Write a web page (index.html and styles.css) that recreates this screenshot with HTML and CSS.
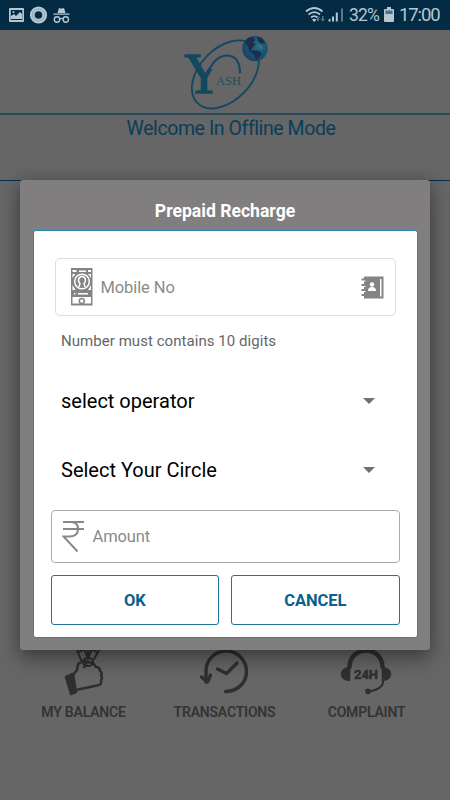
FILE: index.html
```html
<!DOCTYPE html>
<html lang="en">
<head>
<meta charset="utf-8">
<title>Prepaid Recharge</title>
<link rel="stylesheet" href="styles.css">
</head>
<body>
<div class="screen">
  <header class="status">
    <svg class="status-icons" width="72" height="30" viewBox="0 0 72 30">
      <path fill-rule="evenodd" d="M10 8h13q1 0 1 1v12q0 1-1 1H10q-1 0-1-1V9q0-1 1-1zM10.800 10v10h11.500V10z"/>
      <path d="M11 19v-3l3-2 2 2 4-4 2 2v5z"/><circle cx="13.500" cy="12" r="1"/>
      <circle cx="38.500" cy="15" r="6.200" fill="none" stroke="#b4c7d2" stroke-width="4.800"/>
      <circle cx="38.500" cy="15" r="6" fill="none" stroke="#7f9dad" stroke-width=".8"/>
      <path d="M57.500 13l1.500-5q2.500 1 5 0l1.500 5zM53.500 13.500h16v1.300h-16z"/>
      <g fill="none" stroke="#b4c7d2" stroke-width="1.400"><circle cx="57" cy="19.500" r="2.700"/><circle cx="65.800" cy="19.500" r="2.700"/><path d="M59.700 19q1.700-1.200 3.400 0"/></g>
    </svg>
    <div class="status-right">
      <svg width="40" height="30" viewBox="304 0 40 30">
        <g fill="none" stroke="#b4c7d2" stroke-width="1.700"><path d="M306 11.500q8.500-7 16.500 0M308.500 14.500q6-4.800 11.500 0M311 17.500q3.300-2.600 6.500 0"/></g>
        <path d="M312 19.500q2.300-1.500 4.500 0L314.200 22z"/>
        <path d="M328.500 21.500v-2l2-1v3zM332 21.500v-5h2v5zM335.800 21.500v-9h2v9z"/>
        <g fill="#55788a"><path d="M341 8.500h2v13h-2zM317 18h1.500v-2l2 2h-1.500v3h-2zM322 16h1.500v3h1.500l-2.300 2.500-2.200-2.500h1.500z"/></g>
      </svg>
      <span class="battery-text">32%</span>
      <svg class="battery" width="12" height="18" viewBox="0 0 12 18"><path d="M4 1h4v2h2q1 0 1 1v11q0 1-1 1H2q-1 0-1-1V4q0-1 1-1h2z"/><path fill="#527181" d="M2.500 4.500h7v3.500h-7z"/></svg>
      <span class="clock">17:00</span>
    </div>
  </header>

  <div class="brand">
    <svg width="110" height="83" viewBox="170 30 110 83">
      <defs>
        <clipPath id="arm"><path d="M180 45h27v24h8v31h-35z"/></clipPath>
        <radialGradient id="sea" cx=".6" cy=".4" r=".7"><stop offset="0" stop-color="#236c88"/><stop offset="1" stop-color="#123f60"/></radialGradient>
      </defs>
      <ellipse cx="225.400" cy="74.400" rx="26" ry="40" transform="rotate(44 225.400 74.400)" fill="none" stroke="#144861" stroke-width="1.900"/>
      <text class="logo-y" x="184.500" y="92.500" textLength="39" lengthAdjust="spacingAndGlyphs" clip-path="url(#arm)">Y</text>
      <path d="M205 76C212 64 217 55.500 227 55.500Q240 56 240 73" fill="none" stroke="#144861" stroke-width="2.200"/>
      <text class="logo-ash" x="216" y="84.500" textLength="25" lengthAdjust="spacingAndGlyphs">ASH</text>
      <circle cx="255" cy="48.500" r="12.700" fill="url(#sea)"/>
      <path class="land" d="M245 42l3-4 5-1 2 3-2 3 3 1-3 3-2 3 4 3-1 2-5-4-1-5zM257 37l5 1 3 5-4 1-3-3zM253 50l6 1 3 3-3 3-2 4-3-6z"/>
      <path d="M258 43l4 3 1 4-4-2z" fill="#466f76"/>
    </svg>
  </div>
  <div class="welcome">Welcome In Offline Mode</div>

  <main class="page">
    <nav class="tiles">
      <div class="tile">
        <svg width="52" height="52" viewBox="58 646 52 52" class="line-icon">
          <path d="M77 650l4 10M99 650l-5 9M79 652l5-3 4 9 4-9 6 4M88 649v10" stroke-width="2"/>
          <ellipse cx="88" cy="662" rx="5" ry="4" stroke-width="2.200"/>
          <path d="M73 675l4-5 1-6q6-4 11-2M84 667l3-5 6 1 3 4q4 0 4 4 3 2 1 4 2 3 0 5 1 4-2 5l-9 2-14 3"/>
          <path class="solid" d="M66 677l7-3 3 18-5 2z"/>
        </svg>
        <span>MY BALANCE</span>
      </div>
      <div class="tile">
        <svg width="52" height="52" viewBox="199 646 52 52" class="line-icon">
          <path d="M225.500 691.500c12 0 21-9 21-20s-9-20.500-20-20.500c-12 0-20.500 9-20.500 20v11" stroke-width="3.500"/>
          <path d="M201.500 677l6 5 3-7" stroke-width="3.500"/><path d="M217.500 669l9 4.500 10.500-10.500" stroke-width="3.200"/>
        </svg>
        <span>TRANSACTIONS</span>
      </div>
      <div class="tile tile-help">
        <svg width="54" height="52" viewBox="341 646 54 52" class="line-icon">
          <path d="M350.500 667C351 645 383 645 383.500 667" stroke-width="4.500"/>
          <path class="solid" d="M351 667v14q-9-1-9-7t9-7zM383 667v14q9-1 9-7t-9-7z" stroke-width="0.600"/>
          <path d="M384 680q1 9-14 11.500" stroke-width="2"/><circle class="solid" cx="369" cy="691.300" r="1.600"/>
          <text class="hours" x="355" y="679" textLength="24" lengthAdjust="spacingAndGlyphs">24H</text>
        </svg>
        <span>COMPLAINT</span>
      </div>
    </nav>
  </main>

  <section class="dialog">
    <h1>Prepaid Recharge</h1>
    <div class="panel">
      <div class="field mobile">
        <svg width="22" height="38" viewBox="0 0 22 38">
          <path fill="#848484" d="M0 0h21.500v37.500H0z"/>
          <path fill="#fff" d="M1.500 2h4v2h-4zM8 2.500h7V4H8zM17 2h3v2h-3zM1.500 29h18.500v6.500H1.500zM7 25h10v1.500H7zM3 25h1.500v1.500H3zM1.500 6h3L1.500 10zM20 6h-3l3 4zM1.500 17l3 5h-3zM20 17l-3 5h3z"/>
          <circle cx="11" cy="13.500" r="7.300" fill="#848484" stroke="#fff" stroke-width="1.500"/>
          <path d="M8 19l1-3.500c-3-3-1-7 2-7s5 4 2 7l1 3.500" fill="none" stroke="#fff" stroke-width="1.500"/>
          <circle cx="10.800" cy="33" r="2.500" fill="#fff" stroke="#848484" stroke-width="1.500"/>
        </svg>
        <span>Mobile No</span>
        <svg class="contacts" width="23" height="23" viewBox="0 0 23 23">
          <path fill="#848484" d="M3 .5h19.500v22H3zM.5 2.500H4v2H.5zM.5 8H4v2H.5zM.5 13H4v2H.5zM.5 18H4v2H.5z"/>
          <path fill="#fff" d="M19 3h1.500v17.500H19zM2.500 4.500h2v1h-2zM2.500 10h2v1h-2zM2.500 15h2v1h-2zM7 15q0-4 4-4t4 4z"/><circle cx="11" cy="8.500" r="2.200" fill="#fff"/>
        </svg>
      </div>
      <p class="hint">Number must contains 10 digits</p>
      <div class="select"><span class="operator">select operator</span><i></i></div>
      <div class="select circle"><span>Select Your Circle</span><i></i></div>
      <div class="field amount">
        <svg width="23" height="33" viewBox="0 0 23 33" fill="none" stroke="#888" stroke-width="2"><path d="M1 2h21M1 9h21M1 2h8q7 0 7 7t-8 7.500H1.500L15.500 31.500"/></svg>
        <span>Amount</span>
      </div>
      <div class="actions"><button>OK</button><button class="cancel">CANCEL</button></div>
    </div>
  </section>
</div>
</body>
</html>
```
FILE: styles.css
```css
* { box-sizing: border-box; }
body { margin: 0; font-family: Roboto, sans-serif; }
.screen { position: relative; width: 450px; height: 800px; overflow: hidden; background: #666; }
svg { display: block; flex: none; }
.status { height: 30px; background: #032b44; display: flex; justify-content: space-between; color: #b4c7d2; fill: #b4c7d2; }
.status-right { display: flex; align-items: center; padding-right: 10px; font-size: 18px; }
.battery-text { margin-left: 5px; width: 30px; font-size: 17.500px; letter-spacing: -.8px; white-space: nowrap; }
.battery { margin-left: 4px; }
.clock { margin-left: 4px; width: 41px; letter-spacing: -1.100px; font-size: 18.500px; white-space: nowrap; }
.brand { height: 85px; border-bottom: 2px solid #23495d; display: flex; justify-content: center; }
.logo-y { font: 57px "Liberation Serif", serif; fill: #144861; stroke: #144861; stroke-width: 1.500px; }
.logo-ash { font: 13.500px "Liberation Serif", serif; fill: #244c60; }
.land { fill: #202c4b; }
.welcome { height: 66px; padding: 3px 0 0 12px; border-bottom: 1px solid #032f4c; text-align: center; font-size: 19.500px; letter-spacing: -.42px; line-height: 22px; color: #093d5b; }
.page { height: 619px; display: flex; align-items: flex-start; padding-top: 465px; }
.tiles { display: flex; width: 450px; padding-left: 13px; }
.tile { width: 141px; display: flex; flex-direction: column; align-items: center; color: #333; font-size: 14px; letter-spacing: -.2px; font-weight: 600; }
.tile-help { padding-left: 2px; }
.tile span { margin-top: 6px; line-height: 17px; }
.line-icon { fill: none; stroke: #2f2f2f; stroke-width: 2.500px; stroke-linecap: round; stroke-linejoin: round; }
.line-icon .solid { fill: #2f2f2f; }
.hours { font: bold 12px Roboto, sans-serif; letter-spacing: 0; fill: #2f2f2f; stroke-width: .5px; }
.dialog { position: absolute; left: 20px; top: 180px; width: 410px; height: 470px; padding: 0 12.500px; background: #817e7f; border-radius: 3px; box-shadow: 0 10px 20px rgba(0,0,0,.32), 0 0 16px rgba(0,0,0,.2); }
h1 { margin: 0; height: 50px; padding-top: 20px; text-align: center; color: #fff; font-size: 17.600px; line-height: 22px; font-weight: 700; }
.panel { height: 408px; padding: 27px 17px 0; background: #fff; border: 1.500px solid #2b87ad; border-radius: 3px; }
.field { display: flex; align-items: center; border: 1px solid #aaa; border-radius: 4px; color: #8b8b8b; font-size: 16.500px; letter-spacing: -.1px; }
.mobile { height: 58px; margin: 0 4px; padding: 0 11px 0 15px; border: 1.500px solid #ddd; border-radius: 5px; }
.mobile span { margin-left: 8px; }
.contacts { margin-left: auto; }
.hint { margin: 15px 0 0 10.500px; font-size: 15px; line-height: 20px; letter-spacing: .05px; color: #666; }
.select { height: 68px; margin-top: 16px; padding: 0 25px 0 10.500px; display: flex; align-items: center; justify-content: space-between; font-size: 20px; color: #000; }
.select i { width: 0; height: 0; border: 6px solid transparent; border-top-color: #707070; border-bottom: 0; }
.circle { margin-top: 1px; }
.amount { height: 53px; margin-top: 6px; padding-left: 10px; }
.amount span { margin-left: 8px; }
.actions { display: grid; grid-template-columns: 1fr 1fr; gap: 12px; margin-top: 12px; }
button { height: 50px; padding: 1px 0 0; background: #fff; border: 1px solid #1d759b; border-radius: 3px; color: #0a5f8c; font: 700 16.500px Roboto, sans-serif; letter-spacing: -.1px; }
```
